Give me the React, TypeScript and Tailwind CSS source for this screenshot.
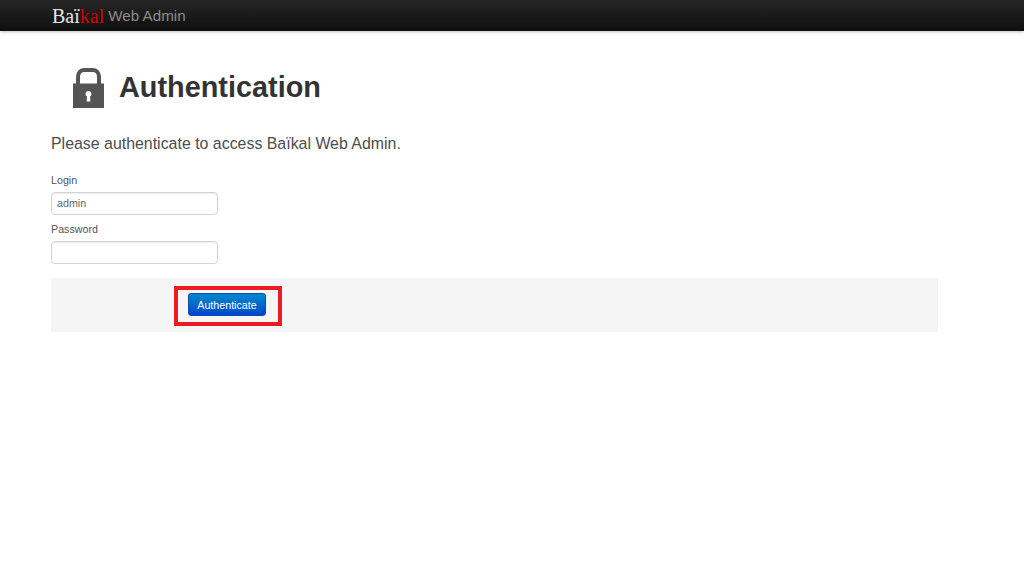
export default function App() {
  return (
    <div className="relative h-[585px] bg-white font-['Liberation_Sans',Arial,sans-serif] text-[#404040]">
      <header className="h-[31px] bg-gradient-to-b from-[#262626] to-[#0f0f0f] shadow-[0_1px_3px_rgba(0,0,0,0.25)] pl-[52px] flex items-center">
        <span className="font-['Liberation_Serif',serif] text-[20px] leading-none text-[#e6e6e6]">
          Baï<span className="text-[#d40000]">kal</span>
        </span>
        <span className="ml-[4px] text-[15.2px] leading-none text-[#8c8c8c]">Web Admin</span>
      </header>
      <main className="pl-[51px] w-[938px]">
        <div className="flex items-center h-[47px] mt-[33px] pl-[21px]">
          <svg width="33" height="40" viewBox="0 0 33 40" className="shrink-0 mt-[1px]">
            <path
              d="M6 17V9C6 4.5 8.5 2 12.5 2H20.5C24.5 2 27 4.5 27 9V17"
              fill="none"
              stroke="#555555"
              strokeWidth="4"
            />
            <path
              fillRule="evenodd"
              fill="#555555"
              d="M1 15.5H32V40H1ZM16.5 23a3 3 0 0 0-1.5 5.6L14.6 33.5h3.8L18 28.6A3 3 0 0 0 16.5 23Z"
            />
          </svg>
          <h1 className="ml-[14px] text-[28.85px] font-bold leading-[47px] text-[#333333]">Authentication</h1>
        </div>
        <p className="mt-[21px] text-[15.92px] leading-[24px] text-[#4d4d4d]">
          Please authenticate to access Baïkal Web Admin.
        </p>
        <form className="mt-[16px]">
          <label className="block text-[10.7px] leading-[16px] text-[#555555]">Login</label>
          <input
            defaultValue="admin"
            className="block mt-[4px] w-[167px] h-[23px] pl-[5px] pb-[1px] border border-[#d4d4d4] rounded-[4px] text-[10.7px] text-[#666666] shadow-[inset_0_1px_1px_rgba(0,0,0,0.075)] outline-none"
          />
          <label className="block mt-[6px] text-[10.7px] leading-[16px] text-[#555555]">Password</label>
          <input
            type="password"
            className="block mt-[4px] w-[167px] h-[23px] pl-[5px] border border-[#d4d4d4] rounded-[4px] text-[10.7px] shadow-[inset_0_1px_1px_rgba(0,0,0,0.075)] outline-none"
          />
          <div className="mt-[14px] h-[54px] bg-[#f5f5f5] pl-[137px] pt-[15px]">
            <button
              type="button"
              className="block w-[78px] h-[23px] pt-[1px] rounded-[3px] bg-gradient-to-b from-[#0088cc] to-[#0044cc] border border-[#0a4fb0] text-white text-[10.7px] leading-none"
            >
              Authenticate
            </button>
          </div>
        </form>
      </main>
      <div className="absolute left-[174px] top-[286px] w-[108px] h-[40px] border-[4px] border-[#ed1c24]" />
    </div>
  );
}
